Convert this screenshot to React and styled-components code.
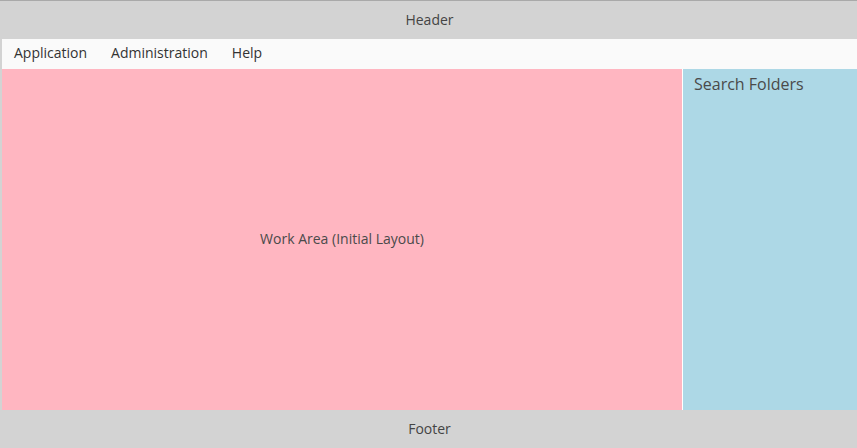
import React from "react";
import styled, { createGlobalStyle } from "styled-components";

const Global = createGlobalStyle`
  html, body { margin: 0; padding: 0; }
  body {
    background: #d3d3d3;
    font-family: "Open Sans", "Liberation Sans", sans-serif;
    color: #444;
  }
`;

const Page = styled.div`
  display: flex;
  flex-direction: column;
  height: 448px;
  padding-left: 2px;
  border-top: 1px solid #a9a9a9;
  box-sizing: border-box;
  background: #d3d3d3;
`;

const Bar = styled.div`
  height: 38px;
  flex: 0 0 38px;
  box-sizing: border-box;
  display: flex;
  align-items: center;
  justify-content: center;
  padding-bottom: ${(p) => p.$lift || 0}px;
  font-size: 14px;
  color: #444;
`;

const Menu = styled.nav`
  height: 30px;
  flex: 0 0 30px;
  box-sizing: border-box;
  display: flex;
  align-items: center;
  padding-bottom: 4px;
  background: #fafafa;
`;

const MenuItem = styled.div`
  padding: 0 12px;
  font-size: 14px;
  color: #333;
`;

const Main = styled.div`
  flex: 1;
  display: flex;
  gap: 1px;
  min-height: 0;
  background: #ffffff;
`;

const WorkArea = styled.div`
  flex: 0 0 680px;
  box-sizing: border-box;
  background: #ffb6c1;
  display: flex;
  align-items: center;
  justify-content: center;
  padding-bottom: 2px;
  font-size: 14px;
  color: #4a4a4a;
`;

const Side = styled.aside`
  flex: 1;
  background: #add8e6;
  padding: 4px 11px;
  font-size: 16px;
  color: #4a4a4a;
`;

export default function App() {
  return (
    <>
      <Global />
      <Page>
        <Bar $lift={2}>Header</Bar>
        <Menu>
          <MenuItem>Application</MenuItem>
          <MenuItem>Administration</MenuItem>
          <MenuItem>Help</MenuItem>
        </Menu>
        <Main>
          <WorkArea>Work Area (Initial Layout)</WorkArea>
          <Side>Search Folders</Side>
        </Main>
        <Bar $lift={2}>Footer</Bar>
      </Page>
    </>
  );
}
